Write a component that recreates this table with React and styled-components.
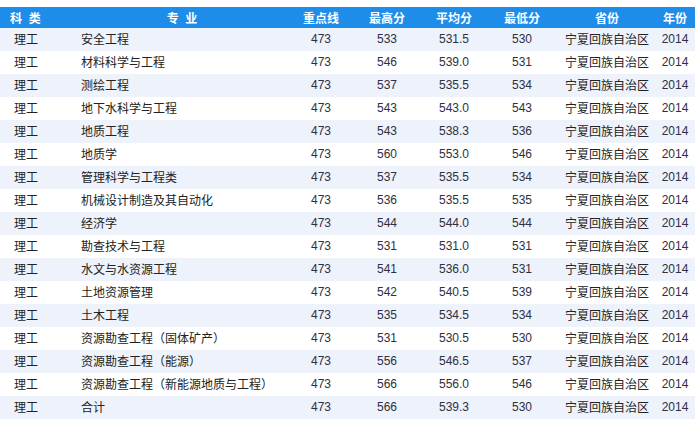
import React from 'react';
import styled, { createGlobalStyle } from 'styled-components';

const GlobalStyle = createGlobalStyle`
  html, body {
    margin: 0;
    padding: 0;
    background: #ffffff;
    overflow: hidden;
  }
`;

const cols = [70, 226, 50, 82, 52, 84, 86, 50];

const rows = [
  ['安全工程', '473', '533', '531.5', '530'],
  ['材料科学与工程', '473', '546', '539.0', '531'],
  ['测绘工程', '473', '537', '535.5', '534'],
  ['地下水科学与工程', '473', '543', '543.0', '543'],
  ['地质工程', '473', '543', '538.3', '536'],
  ['地质学', '473', '560', '553.0', '546'],
  ['管理科学与工程类', '473', '537', '535.5', '534'],
  ['机械设计制造及其自动化', '473', '536', '535.5', '535'],
  ['经济学', '473', '544', '544.0', '544'],
  ['勘查技术与工程', '473', '531', '531.0', '531'],
  ['水文与水资源工程', '473', '541', '536.0', '531'],
  ['土地资源管理', '473', '542', '540.5', '539'],
  ['土木工程', '473', '535', '534.5', '534'],
  ['资源勘查工程（固体矿产）', '473', '531', '530.5', '530'],
  ['资源勘查工程（能源）', '473', '556', '546.5', '537'],
  ['资源勘查工程（新能源地质与工程）', '473', '566', '556.0', '546'],
  ['合计', '473', '566', '539.3', '530'],
];

const Page = styled.div`
  padding-top: 7px;
  width: 695px;
  overflow: hidden;
`;

const Table = styled.table`
  width: 700px;
  border-collapse: collapse;
  table-layout: fixed;
`;

const HeadRow = styled.tr`
  background: #1e8dea;
  height: 21px;
`;

const Th = styled.th`
  padding: 0;
  padding-left: ${(p) => (p.$left ? '10px' : '0')};
  text-align: ${(p) => (p.$left ? 'left' : 'center')};
  color: #ffffff;
  font-family: 'Noto Sans CJK SC', sans-serif;
  font-size: 12px;
  font-weight: 700;
  letter-spacing: ${(p) => (p.$spaced ? '2px' : '0')};
  line-height: 21px;
  white-space: pre;
`;

const Row = styled.tr`
  height: 23px;
  background: ${(p) => (p.$shaded ? '#edf2fb' : '#ffffff')};
`;

const Td = styled.td`
  padding: 0;
  padding-left: ${(p) => p.$pad || 0}px;
  text-align: ${(p) => (p.$pad ? 'left' : 'center')};
  color: ${(p) => (p.$num ? '#2f2f3f' : '#222222')};
  font-family: ${(p) =>
    p.$num
      ? "'Liberation Sans', Arial, sans-serif"
      : "'Noto Sans CJK SC', sans-serif"};
  font-size: 12px;
  line-height: 23px;
  white-space: nowrap;
  overflow: hidden;
`;

const Cn = styled.span`
  position: relative;
  top: -1px;
`;

export default function App() {
  return (
    <Page>
      <GlobalStyle />
      <Table>
        <colgroup>
          {cols.map((w, i) => (
            <col key={i} style={{ width: w }} />
          ))}
        </colgroup>
        <thead>
          <HeadRow>
            <Th $left $spaced>科 类</Th>
            <Th $spaced>专 业</Th>
            <Th>重点线</Th>
            <Th>最高分</Th>
            <Th>平均分</Th>
            <Th>最低分</Th>
            <Th>省份</Th>
            <Th>年份</Th>
          </HeadRow>
        </thead>
        <tbody>
          {rows.map((r, i) => (
            <Row key={i} $shaded={i % 2 === 0}>
              <Td $pad={14}><Cn>理工</Cn></Td>
              <Td $pad={11}><Cn>{r[0]}</Cn></Td>
              <Td $num>{r[1]}</Td>
              <Td $num>{r[2]}</Td>
              <Td $num>{r[3]}</Td>
              <Td $num>{r[4]}</Td>
              <Td><Cn>宁夏回族自治区</Cn></Td>
              <Td $num>2014</Td>
            </Row>
          ))}
        </tbody>
      </Table>
    </Page>
  );
}
